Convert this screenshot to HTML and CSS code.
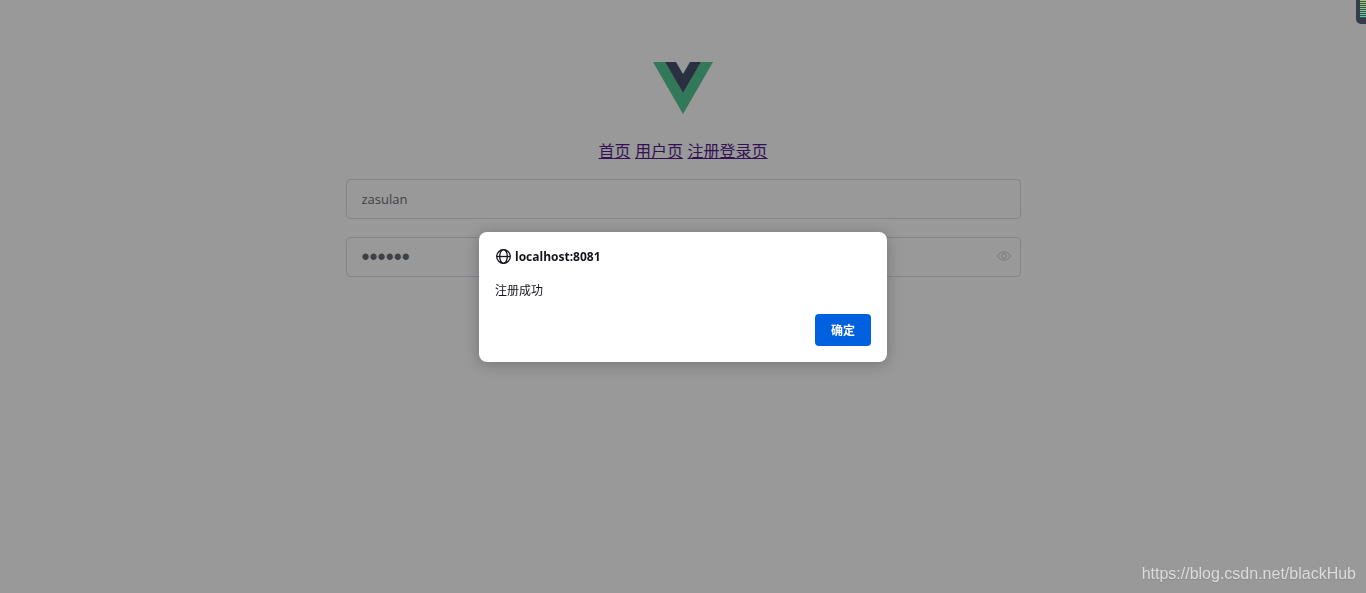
FILE: index.html
```html
<!DOCTYPE html>
<html lang="zh-CN">
<head>
<meta charset="utf-8">
<meta name="viewport" content="width=device-width, initial-scale=1">
<title>注册登录页</title>
<link rel="stylesheet" href="styles.css">
</head>
<body>
<main class="page">
  <svg class="logo" viewBox="0 0 60 52" aria-hidden="true">
    <path fill="#317959" d="M0 0h12l18 31L48 0h12L30 52z"/>
    <path fill="#293141" d="M12 0h11l7 12 7-12h11L30 31z"/>
  </svg>
  <nav class="nav">
    <a href="#home">首页</a>
    <a href="#user">用户页</a>
    <a href="#login">注册登录页</a>
  </nav>
  <form class="form">
    <div class="field">
      <input class="field-input" type="text" value="zasulan" aria-label="用户名">
    </div>
    <div class="field">
      <input class="field-input field-password" type="password" value="123456" aria-label="密码">
      <button class="eye" type="button" aria-label="显示密码">
        <svg viewBox="0 0 14 10" fill="none" stroke="currentColor" aria-hidden="true">
          <path d="M.7 5C2 2.300 4.200.8 7 .8S12 2.300 13.300 5C12 7.700 9.800 9.200 7 9.200S2 7.700.7 5z"/>
          <circle cx="7" cy="5" r="2.400"/>
        </svg>
      </button>
    </div>
  </form>
</main>
<div class="backdrop">
  <section class="dialog" role="alertdialog" aria-modal="true" aria-labelledby="origin" aria-describedby="message">
    <header class="dialog-head">
      <svg class="globe" viewBox="0 0 16 16" fill="none" stroke="currentColor" stroke-width="1.300" aria-hidden="true">
        <circle cx="8.500" cy="7.500" r="6.800"/>
        <ellipse cx="8.500" cy="7.500" rx="3.800" ry="6.800"/>
        <path d="M2 7.500h13"/>
      </svg>
      <strong id="origin">localhost:8081</strong>
    </header>
    <p class="message" id="message">注册成功</p>
    <div class="actions"><button class="confirm" type="button">确定</button></div>
  </section>
</div>
<div class="meter" aria-hidden="true"></div>
<div class="watermark">https://blog.csdn.net/blackHub</div>
</body>
</html>
```
FILE: styles.css
```css
* {
  box-sizing: border-box;
}

body {
  margin: 0 8px;
  background: #99999a;
  color: #15141a;
  font-family: "Open Sans", "Noto Sans CJK SC", sans-serif;
}

.page {
  display: flex;
  flex-direction: column;
  align-items: center;
  padding-top: 62px;
}

.logo {
  width: 60px;
  height: 52px;
}

.nav {
  margin-top: 26px;
  font-family: "Liberation Sans", "Noto Sans CJK SC", sans-serif;
  font-size: 16px;
  line-height: 24px;
}

.nav a {
  color: #331152;
}

.form {
  display: grid;
  gap: 18px;
  width: 50%;
  margin-top: 15px;
}

.field {
  position: relative;
}

.field-input {
  display: block;
  width: 100%;
  height: 40px;
  padding: 0 15px;
  border: 1px solid #848588;
  border-radius: 4px;
  background: transparent;
  color: #3f4043;
  font-family: "Open Sans", sans-serif;
  font-size: 13px;
  outline: none;
}

.field-password {
  font-family: "Liberation Sans", Arial, sans-serif;
  font-size: 23px;
}

.eye {
  position: absolute;
  top: 0;
  right: 5px;
  display: flex;
  align-items: center;
  justify-content: center;
  width: 24px;
  height: 38px;
  padding: 0;
  border: 0;
  background: none;
  color: #77797d;
}

.eye svg {
  width: 14px;
  height: 10px;
}

.backdrop {
  position: fixed;
  inset: 0;
  display: flex;
  align-items: center;
  justify-content: center;
}

.dialog {
  width: 408px;
  padding: 16px;
  border-radius: 8px;
  background: #fff;
  box-shadow: 0 2px 14px rgba(30, 30, 35, 0.3);
  font-size: 12px;
}

.dialog-head {
  display: flex;
  align-items: center;
  gap: 4px;
  height: 18px;
}

.globe {
  width: 16px;
  height: 16px;
}

.message {
  margin: 16px 0 14px;
  line-height: 18px;
}

.actions {
  display: flex;
  justify-content: flex-end;
}

.confirm {
  width: 56px;
  height: 32px;
  padding: 0;
  border: 0;
  border-radius: 4px;
  background: #0061e0;
  color: #fff;
  font-family: "Noto Sans CJK SC", sans-serif;
  font-size: 12px;
  font-weight: 700;
}

.meter {
  position: fixed;
  top: 0;
  right: 0;
  width: 10px;
  height: 24px;
  border: solid #363b48;
  border-width: 0 0 6px 4px;
  border-bottom-left-radius: 5px;
  background: repeating-linear-gradient(transparent 0 1px, #3c5058 1px 2px), linear-gradient(#a9c860, #58c3ae);
}

.watermark {
  position: fixed;
  right: 10px;
  bottom: 9px;
  color: #dcdcdd;
  font-family: "Liberation Sans", Arial, sans-serif;
  font-size: 16px;
  line-height: 20px;
  text-shadow: 0 1px 1px #88888a;
}
```
